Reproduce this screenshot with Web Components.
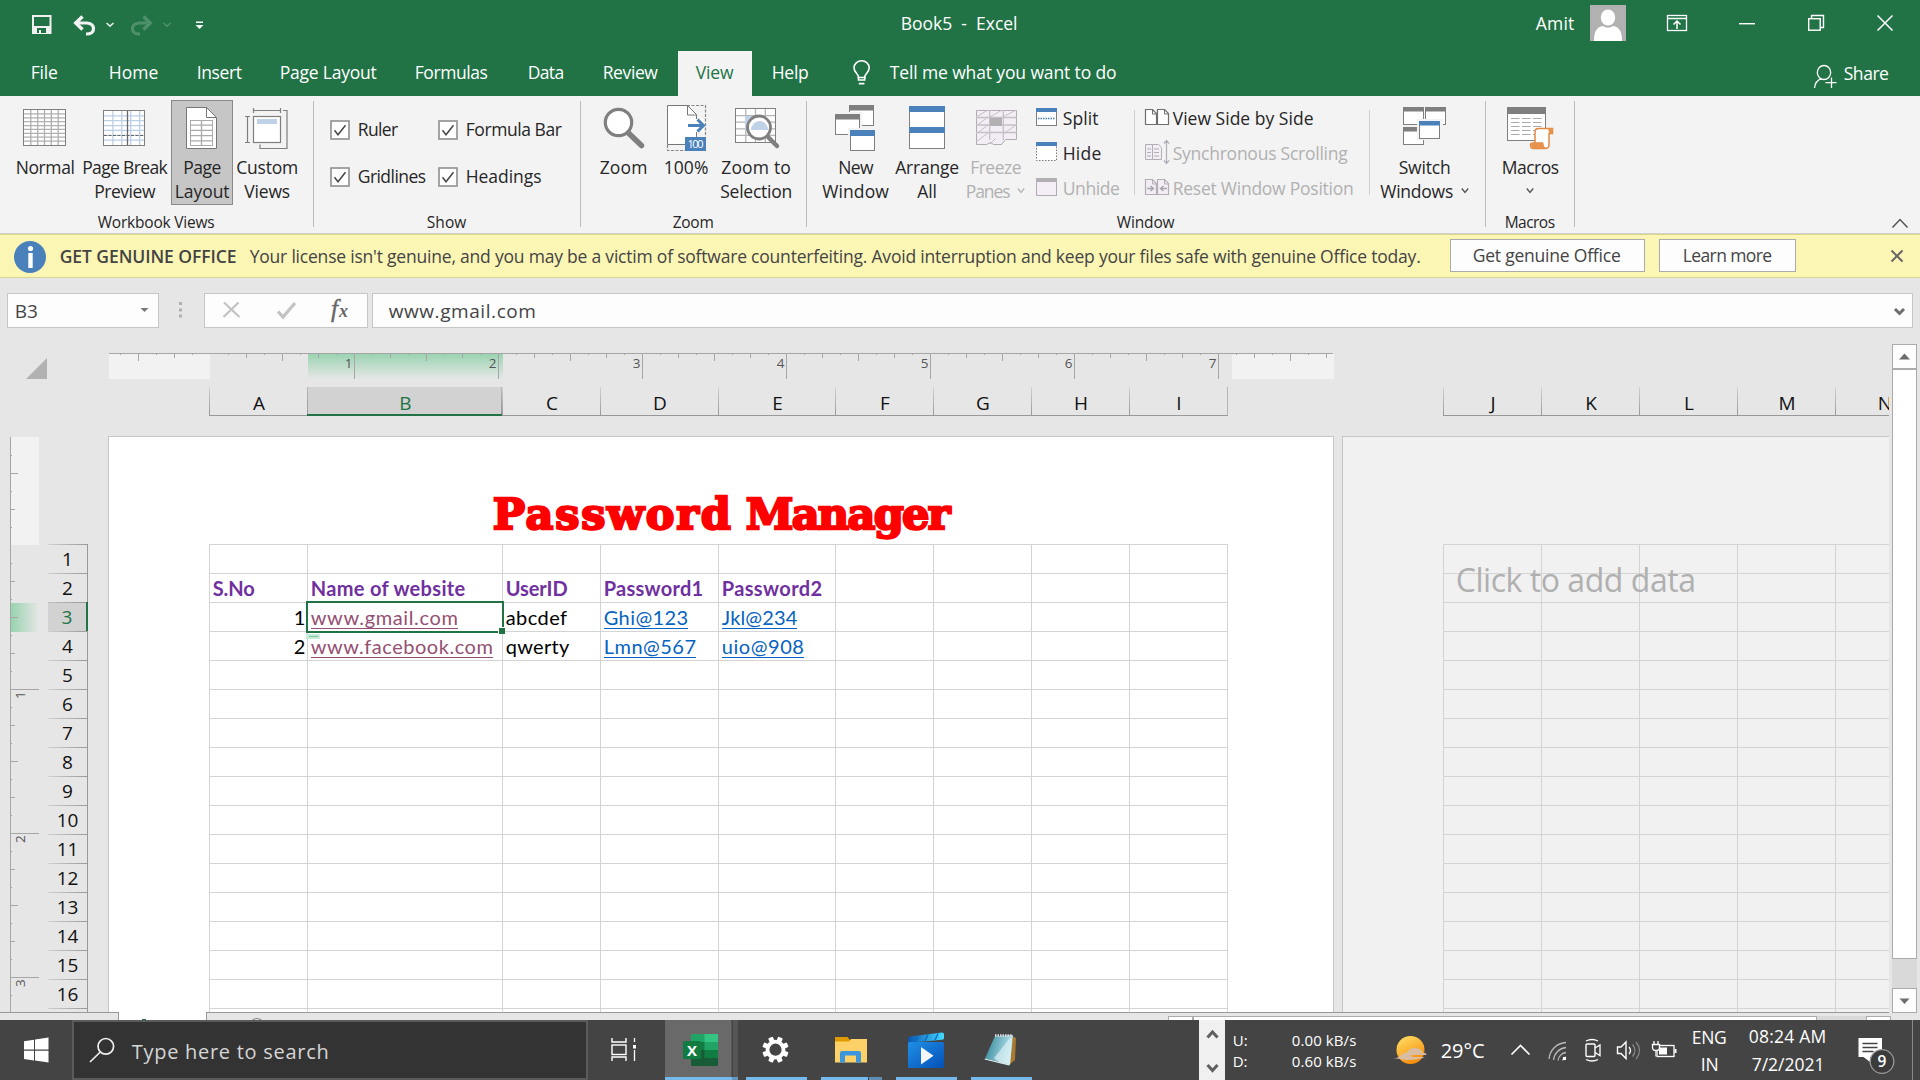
<!DOCTYPE html>
<html lang="en">
<head>
<meta charset="utf-8">
<title>Book5 - Excel</title>
<style>
html,body{margin:0;padding:0}
body{width:1920px;height:1080px;overflow:hidden;display:flex;flex-direction:column;background:#e6e6e6;font-family:"Open Sans","Noto Sans",sans-serif;font-size:17.5px;color:#262626}
</style>
</head>
<body>
<xl-titlebar></xl-titlebar>
<xl-tabs></xl-tabs>
<xl-ribbon></xl-ribbon>
<xl-message></xl-message>
<xl-formulabar></xl-formulabar>
<xl-workspace></xl-workspace>
<xl-bottomstrip></xl-bottomstrip>
<win-taskbar></win-taskbar>
<script>
/* ---------- helpers ---------- */
const svg = (x, y, w, h, body) => `<svg width="${w}" height="${h}" viewBox="${x} ${y} ${w} ${h}" fill="none">${body}</svg>`;
const T = (w, text, css = '') => `<fit-text w="${w}" style="${css}">${text}</fit-text>`;
/* lays out [x, width, html] entries one after another in a flex row, with the gaps as margins */
const row = (start, items) => {
  let at = start;
  return items.map(([x, w, html, css = '']) => {
    const m = x - at; at = x + w;
    return `<div style="flex:none;margin-left:${m}px;width:${w}px;${css}">${html}</div>`;
  }).join('');
};
const R = (x, y, w, h, fill, stroke, extra = '') => `<rect x="${x}" y="${y}" width="${w}" height="${h}" fill="${fill}" ${stroke ? `stroke="${stroke}"` : ''} ${extra}/>`;
const P = (d, stroke, sw = 1, extra = '') => `<path d="${d}" stroke="${stroke}" stroke-width="${sw}" ${extra}/>`;
const F = (d, fill) => `<path d="${d}" fill="${fill}"/>`;

class Base extends HTMLElement {
  connectedCallback() {
    if (this.shadowRoot) return;
    this.attachShadow({ mode: 'open' });
    this.shadowRoot.innerHTML = `<style>:host,*{box-sizing:border-box}svg{display:block;flex:none}${this.css()}</style>${this.html()}`;
  }
  css() { return ''; }
  html() { return '<slot></slot>'; }
}

/* ---------- title bar ---------- */
class TitleBar extends Base {
  css() { return `:host{display:flex;flex:none;height:51px;background:#217346;color:#fff;line-height:46px;align-items:flex-start}`; }
  html() {
    const chev = (x, c) => P(`M${x} 23l3.5 3.2l3.5-3.2`, c, 1.6);
    const qat = svg(30, 0, 180, 51,
      `<path d="M32 15h19.5v19H32z" fill="#f0f0f0"/><path d="M34 17h15.5v9H34zM37 28h9v5h-9z" fill="#217346"/>` + R(39, 30, 2, 3, '#f0f0f0')
      + P('M77 23H87q6.500 .5 6.500 5.800T86 34', '#f2f2f2', 3.200) + P('M82.500 16.500L75.800 23L82.500 29.500', '#f2f2f2', 3.500)
      + chev(106.5, '#dfeae3')
      + P('M149 23H139q-6.500 .5-6.500 5.800T140 34', '#4d9069', 3.200) + P('M143.500 16.500L150.200 23L143.500 29.500', '#4d9069', 3.500)
      + chev(163.5, '#4d9069')
      + R(196, 21.5, 7, 1.5, '#fff') + F('M195.500 25h8l-4 4z', '#fff'));
    const avatar = svg(1590, 5, 36, 36, R(1590, 5, 36, 36, '#b1b1b1')
      + `<ellipse cx="1608" cy="17.500" rx="7.2" ry="8" fill="#fff"/>` + F('M1594 41c0-10 3-14 9-15q5 3.500 10 0c6 1 9 5 9 15z', '#fff'));
    const ctl = svg(1660, 0, 240, 46,
      R(1667.5, 15.5, 19, 15, 'none', '#fff', 'stroke-width="1.300"') + P('M1667 18.500H1687M1677 29v-8M1673.500 24.500l3.500-3.500l3.500 3.500', '#fff', 1.5)
      + R(1739, 23, 16, 1.4, '#fff')
      + R(1808.7, 18.7, 11.500, 11.500, 'none', '#fff', 'stroke-width="1.4"') + P('M1811.500 18.500v-3H1823.500v12H1820.500', '#fff', 1.4)
      + P('M1877.500 15.500l15 15M1892.500 15.500l-15 15', '#fff', 1.5));
    return row(0, [[30, 180, qat], [901, 116, T(116, 'Book5  -  Excel')], [1536, 38, T(38, 'Amit')], [1590, 36, avatar, 'padding-top:5px'], [1660, 240, ctl]]);
  }
}

/* ---------- ribbon tabs ---------- */
class Tab extends Base {
  css() { return `:host{display:block;flex:none;height:45px;line-height:43px;text-align:center}
    :host([active]){background:#f3f3f3;color:#217346}`; }
  html() { return `<slot></slot>`; }
}
class Tabs extends Base {
  css() { return `:host{display:flex;flex:none;height:45px;background:#217346;color:#fff;line-height:43px}`; }
  html() {
    const t = (x, w, s) => [x, w, `<xl-tab>${T(w, s)}</xl-tab>`];
    const bulb = svg(850, 56, 24, 34, P('M858.500 80v-3.200c0-2.600-4.500-4-4.500-9a7.600 7 0 0 1 15.200 0c0 5-4.500 6.400-4.500 9v3.200z', '#fff', 1.6) + P('M857.500 77.500h8.200M858.800 83.700h5.600', '#fff', 1.7));
    const person = svg(1812, 60, 28, 32, `<ellipse cx="1824" cy="72.500" rx="6.700" ry="7" stroke="#fff" stroke-width="1.300"/>` + P('M1814.500 88c.5-5 3-8.200 7-9.200', '#fff', 1.3) + P('M1831.500 77.500v10.500M1825.500 82.700h11', '#fff', 1.300));
    return row(0, [t(31, 26, 'File'), t(109, 49, 'Home'), t(197, 44, 'Insert'), t(280, 96, 'Page Layout'), t(415, 72, 'Formulas'), t(528, 35, 'Data'), t(603, 54, 'Review'),
      [678, 74, `<xl-tab active><div style="padding-left:18px">${T(37, 'View')}</div></xl-tab>`], t(772, 36, 'Help'),
      [850, 24, bulb, 'padding-top:5px'], [890, 226, T(226, 'Tell me what you want to do')],
      [1812, 28, person, 'padding-top:9px'], [1844, 44, T(44, 'Share'), 'padding-top:1px']]);
  }
}

/* ---------- ribbon ---------- */
const gridLines = (x, y, w, h, nx, ny, c) => {
  let d = '';
  for (let i = 1; i < nx; i++) d += `M${(x + w * i / nx).toFixed(1)} ${y}v${h}`;
  for (let i = 1; i < ny; i++) d += `M${x} ${(y + h * i / ny).toFixed(1)}h${w}`;
  return P(d, c, 1.3);
};
const G = '#7f7f7f', B = '#4a81ba';
const ICONS = {
  normal: R(23.500, 109.500, 42, 36, '#fff', G) + gridLines(24, 110, 41, 35, 6, 9, '#b0b0b0'),
  pbreak: R(103.500, 110.500, 41, 35, '#fff', G) + gridLines(104, 111, 40, 34, 4.500, 7, '#bccfe5') + P('M127.500 111v34', '#666', 1.3) + P('M104 135.500h40', '#666', 1.2, 'stroke-dasharray="3 1.500"'),
  playout: `<path d="M186.500 107.500h20l10 10v31h-30z" fill="#fff" stroke="#777"/>` + P('M206.500 107.500v10h10', '#777') + R(190.500, 120.500, 22, 25, '#fff', '#aaa') + gridLines(190, 120, 23, 26, 2, 5, '#aaa'),
  custom: R(253.500, 116.500, 27, 26, '#fff', G, 'stroke-width="1.200"') + R(257, 119, 20, 5, '#bfd2e8') + P('M253.500 108v5M253.500 110.500h27M280.500 108v5M245 116.500h5M247.500 116.500v26M245 142.500h5M283 110.500h4v38h-27v-4', G, 1.2),
  zoom: `<circle cx="618.500" cy="122.500" r="13.200" fill="#fff" stroke="#7f7f7f" stroke-width="3.200"/>` + P('M628.500 133L641.500 145.500', G, 5.500, 'stroke-linecap="round"'),
  hundred: P('M687 105.500h18.500v31M667.500 145v5.500h18', '#888', 1.200, 'stroke-dasharray="3 1.500"') + `<path d="M667.500 105.500h20l9 9v30h-29z" fill="#fff" stroke="#777"/>` + P('M687.500 105.500v9.500h9', '#777')
    + R(684, 119, 20, 13, '#fff') + P('M688 125.500h15M697.500 119.500l6 6l-6 6', B, 3) + R(685, 137, 21, 14, B) + `<text x="695.500" y="148.300" font-size="11" fill="#fff" text-anchor="middle" textLength="16">100</text>`,
  zoomsel: R(735.500, 108.500, 40, 34, '#fff', G) + gridLines(736, 109, 39, 33, 4, 5, '#b5b5b5') + R(745, 116, 15, 14, '#bfd2e8') + `<circle cx="759" cy="127.500" r="11.500" fill="#fff" stroke="#7f7f7f" stroke-width="2.800"/><path d="M751 130a8.500 9 0 0 1 17 0z" fill="#bfd2e8"/>` + P('M768 137l9 9', G, 4.500, 'stroke-linecap="round"'),
  neww: R(849.500, 105.500, 24, 20, '#fff', G) + R(849, 105, 25, 5.500, G) + R(833, 112, 29, 24, '#f3f3f3') + R(835.500, 114.500, 24, 20, '#fff', G) + R(835, 114, 25, 5.500, G) + R(848, 128, 29, 24, '#f3f3f3') + R(850.500, 130.500, 24, 20, '#fff', G) + R(850, 130, 25, 6, B),
  arrange: R(909.500, 106.500, 35, 42, '#fff', G) + R(909, 106, 36, 6, B) + R(909, 127, 36, 6, B),
  freeze: `<path d="M976.500 110.500h40v29h-11l-4 5h-8l-3 -2l-4 2h-10z" fill="#f3eef5" stroke="#b0acb2"/>` + gridLines(976, 110, 41, 30, 3, 4, '#c4c0c6') + P('M976 117l12-7M990 117l12-7M1003 117l13-7M976 126l12-9M976 134l12-9M976 142l12-9M990 144l6-6M1003 134l13-9', '#c4c0c6') + R(990, 118, 12, 8, '#b3b0b4'),
  switchw: R(1403.500, 107.500, 20, 17, '#fff', G) + R(1403, 107, 21, 4.500, G) + R(1425.500, 107.500, 20, 17, '#fff', G) + R(1425, 107, 21, 4.500, G) + R(1403.500, 127.500, 20, 17, '#fff', G) + R(1403, 127, 21, 4.500, G) + R(1417, 119, 26, 21, '#f3f3f3') + R(1419.500, 121.500, 20, 17, '#fff', G) + R(1419, 121, 21, 4.500, B),
  macros: R(1507.500, 107.500, 38, 33, '#fff', G) + R(1507, 107, 39, 7, G) + P('M1511 118.500h31M1511 122.500h31M1511 126.500h31M1511 130.500h25M1511 134.500h25', '#aaa', 1.2, 'stroke-dasharray="8.500 2.500"')
    + `<path d="M1535 144v-12q0-3.500 3.500-3.500h14v5h-3.500v11q0 4-4 4h-11q-3.500 0-3.500-3.500q0-2 3-2h9.500" fill="#fff" stroke="#e08b45" stroke-width="1.500"/>` + F('M1531 143h12.500q0 4 3 5.500h-12q-4 0-3.500-5.500zM1548 128.300h4q2 2 0 5.200h-2.800z', '#e8924b'),
};
const chevAt = (c = '#555') => svg(0, 0, 8, 24, P('M.8 9.500l3.200 4l3.200-4', c, 1.4));

class BigButton extends Base {
  css() { return `:host{display:flex;flex-direction:column;align-items:center;flex:none;height:105px;border:1px solid transparent;line-height:24px}
    :host([on]){background:#c6c6c6;border-color:#8a8a8a}:host([off]){color:#b1b1b1}
    .l{display:flex;height:24px;gap:8px;justify-content:center}`; }
  html() {
    const x = +this.getAttribute('x'), w = +this.getAttribute('w');
    this.style.width = w + 'px';
    const lines = JSON.parse(this.getAttribute('lines'));
    const off = this.hasAttribute('off');
    return svg(x, 101, w, 54, ICONS[this.getAttribute('icon')]) + lines.map(([wd, s, ch]) =>
      `<div class="l">${wd ? T(wd, s) : ''}${ch ? chevAt(off ? '#b5b5b5' : '#555') : ''}</div>`).join('');
  }
}
const big = (x, w, icon, lines, flag = '') => [x, w, `<xl-bigbutton x="${x}" w="${w}" icon="${icon}" lines='${JSON.stringify(lines)}' ${flag}></xl-bigbutton>`];

class SmallButton extends Base {
  css() { return `:host{display:flex;height:35px;line-height:35px;align-items:flex-start}:host([off]){color:#b1b1b1}`; }
}
class Check extends Base {
  css() { return `:host{display:flex;height:47px;line-height:47px;align-items:center;gap:8px}`; }
  html() { return svg(0, 0, 20, 20, R(1, 1, 18, 18, '#fff', '#8f8f8f', 'stroke-width="1.600"') + P('M4.500 10.200l3.500 4.500l7.500-9.500', '#444', 1.500)) + '<slot></slot>'; }
}
class Group extends Base {
  css() { return `:host{display:flex;flex-direction:column;flex:none;height:137px;padding-top:4px;position:relative}
    .b{display:flex;height:107px}.t{height:22px;line-height:22px;font-size:15.500px;display:flex;justify-content:center;margin-top:4px}
    :host::after{content:"";width:1px;height:126px;background:#bdbdbd;position:absolute;right:0;top:5px}`; }
  html() { return `<div class="b"><slot></slot></div><div class="t" style="padding-right:2px">${T(this.getAttribute('tw'), this.getAttribute('label'))}</div>`; }
}
class Ribbon extends Base {
  css() { return `:host{display:flex;flex:none;height:138px;background:#f3f3f3;border-bottom:1px solid #cfcfcf}.s{width:1px;height:85px;background:#d0d0d0;margin-top:10px}`; }
  html() {
    const group = (x0, x1, label, tw, items) => `<xl-group label="${label}" tw="${tw}" style="width:${x1 - x0}px">${row(x0, items)}</xl-group>`;
    const small = (y, w, text, body, iconX, off, gap) => `<xl-smallbutton ${off ? 'off' : ''}>${svg(iconX, y, gap, 35, body)}${T(w, text)}</xl-smallbutton>`;
    const win = (y, c, kind) => kind === 'hide'
      ? R(1036.500, y + .5, 20, 18, '#fff', '#777', 'stroke-dasharray="1.500 1.500"') + R(1036, y, 21, 4, c)
      : R(1036.500, y + .5, 20, 17, kind === 'un' ? '#f3eef5' : '#fff', kind === 'un' ? '#b0acb2' : G) + R(1036, y, 21, 4, c) + (kind === 'split' ? P(`M1038 ${y + 10.500}h17`, B, 1.3, 'stroke-dasharray="1.500 1"') : '');
    const pages = (y, c, f) => `<path d="M1145.500 ${y + .5}h7l4 4v11h-11zM1157.500 ${y + .5}h7l4 4v11h-11z" fill="${f}" stroke="${c}" stroke-width="1.200"/>` + P(`M1152.500 ${y}v5h4M1164.500 ${y}v5h4`, c);
    const L = '#b3aeb6', V = '#f3eef5';
    const sync = `<path d="M1145.500 144.500h7v15h-7zM1152.500 144.500h6l3 3v12h-9z" fill="${V}" stroke="${L}"/>` + P('M1147 149h4M1147 152.500h4M1147 156h4M1154 149h5M1154 152.500h5M1154 156h5M1166.500 141v22M1164 143.500l2.500-3l2.500 3M1164 160.500l2.500 3l2.500-3', L, 1.2);
    const reset = pages(179, L, V) + P('M1147 188.500h6M1150.500 186l3 2.500l-3 2.500M1167 188.500h-6M1163.500 186l-3 2.500l3 2.500', '#a9a5ab', 1.5);
    const col1 = small(101, 35, 'Split', win(108, B, 'split'), 1036, 0, 27) + small(136, 38, 'Hide', win(142, B, 'hide'), 1036, 0, 27) + small(171, 56, 'Unhide', win(178, '#b3b0b4', 'un'), 1036, 1, 27);
    const col2 = small(101, 140, 'View Side by Side', pages(109, '#6e6e6e', '#fff'), 1144, 0, 29) + small(136, 174, 'Synchronous Scrolling', sync, 1144, 1, 29) + small(171, 180, 'Reset Window Position', reset, 1144, 1, 29);
    const ck = (w, s) => `<xl-check>${T(w, s)}</xl-check>`;
    return group(0, 314, 'Workbook Views', 116, [
        big(8, 74, 'normal', [[58, 'Normal']]), big(82, 85, 'pbreak', [[84, 'Page Break'], [60, 'Preview']]),
        big(171, 62, 'playout', [[37, 'Page'], [54, 'Layout']], 'on'), big(234, 66, 'custom', [[61, 'Custom'], [45, 'Views']])])
      + group(314, 581, 'Show', 39, [
        [330, 100, ck(39, 'Ruler') + ck(67, 'Gridlines'), 'padding-top:6px'], [438, 130, ck(95, 'Formula Bar') + ck(75, 'Headings'), 'padding-top:6px']])
      + group(581, 807, 'Zoom', 40, [
        big(595, 57, 'zoom', [[47, 'Zoom']]), big(660, 52, 'hundred', [[44, '100%']]), big(716, 80, 'zoomsel', [[69, 'Zoom to'], [71, 'Selection']])])
      + group(807, 1486, 'Window', 57, [
        big(818, 75, 'neww', [[34, 'New'], [66, 'Window']]), big(893, 68, 'arrange', [[63, 'Arrange'], [19, 'All']]), big(961, 69, 'freeze', [[50, 'Freeze'], [43, 'Panes', 1]], 'off'),
        [1036, 90, col1, 'padding-top:1px'], [1134, 1, '<div class="s"></div>'], [1144, 215, col2, 'padding-top:1px'], [1369, 1, '<div class="s"></div>'],
        big(1376, 97, 'switchw', [[51, 'Switch'], [72, 'Windows', 1]])])
      + group(1486, 1575, 'Macros', 49, [big(1495, 70, 'macros', [[56, 'Macros'], [0, '', 1]])])
      + `<div style="margin:118px 0 0 314px">${svg(1889, 214, 22, 18, P('M1892.500 227.500l7.500-8l7.500 8', '#555', 1.5))}</div>`;
  }
}

/* ---------- message bar ---------- */
class Message extends Base {
  css() { return `:host{display:flex;flex:none;height:44px;background:#fcf6b5;border-top:1px solid #dbd689;border-bottom:1px solid #d8d592;color:#444;line-height:42px}
    .b{height:33px;line-height:31px;background:#fdfdfd;border:1px solid #ababab;padding-left:22px;margin-top:4px}`; }
  html() {
    const info = svg(14, 235, 32, 42, `<circle cx="30" cy="257" r="16" fill="#4a81ba"/><circle cx="30.500" cy="248.500" r="2.600" fill="#fff"/>` + R(28.300, 253, 4.400, 15, '#fff'));
    return row(0, [[14, 32, info], [60, 176, T(176, 'GET GENUINE OFFICE', 'font-weight:600')],
      [250, 1170, T(1170, "Your license isn't genuine, and you may be a victim of software counterfeiting. Avoid interruption and keep your files safe with genuine Office today.")],
      [1450, 195, `<div class="b">${T(147, 'Get genuine Office')}</div>`], [1659, 137, `<div class="b">${T(88, 'Learn more', 'margin-left:1px')}</div>`],
      [1889, 16, svg(1889, 235, 16, 42, P('M1891.500 250.500l11 11M1902.500 250.500l-11 11', '#666', 2))]]);
  }
}

/* ---------- formula bar ---------- */
class FormulaBar extends Base {
  css() { return `:host{display:flex;flex:none;height:50px;padding-top:15px;color:#444;line-height:35px}
    .x{height:35px;border:1px solid #c6c6c6;background:#fdfdfd;display:flex;font-size:19px}`; }
  html() {
    return row(0, [
      [7, 152, `<div class="x">${row(8, [[15, 22, T(22, 'B3')], [138, 14, svg(138, 294, 14, 33, F('M140.500 308h8l-4 4z', '#777'))]])}</div>`],
      [176, 8, svg(176, 293, 8, 35, R(179, 302, 3, 3, '#b0b0b0') + R(179, 308.500, 3, 3, '#b0b0b0') + R(179, 314.500, 3, 3, '#b0b0b0'))],
      [204, 164, `<div class="x">${svg(205, 294, 160, 33, P('M224 302.500l15.500 14.500M238.500 302.500l-15 14.500', '#c3c3c3', 2.300) + P('M278 311.500l5 5.500L295 303', '#c3c3c3', 3.200)
        + '<text x="331" y="316.500" font-family="Liberation Serif" font-style="italic" font-size="25" fill="#666" stroke="#666" stroke-width=".4">f</text><text x="339" y="316.500" font-family="Liberation Serif" font-style="italic" font-weight="bold" font-size="18" fill="#666">x</text>')}</div>`],
      [372, 1541, `<div class="x">${row(373, [[389, 147, T(147, 'www.gmail.com')], [1890, 20, svg(1890, 294, 20, 33, P('M1895 309l4.500 4.500L1904 309', '#6d6d6d', 3))]])}</div>`]]);
  }
}

/* ---------- rulers ---------- */
class HRuler extends Base {
  css() { return `:host{display:block;flex:none;width:1225px;height:26px}`; }
  html() {
    let d = '', n = '';
    for (let k = -5; k <= 62; k++) {
      const x = 210.500 + 18 * k; if (x > 1333) break;
      const inch = k % 8 === 0 && k > 0;
      if (k === 0) continue;
      const len = inch ? 26 : k % 4 === 0 ? 8 : k % 2 === 0 ? 5 : 2;
      d += `M${x} 353v${len}`;
      if (inch) n += `<text x="${x - 2}" y="368" text-anchor="end" font-size="13.500" fill="#555">${k / 8}</text>`;
    }
    return svg(109, 353, 1225, 26, `<defs><linearGradient id="g" x2="0" y2="1"><stop stop-color="#98d3af"/><stop offset="1" stop-color="#e6e6e6"/></linearGradient></defs>`
      + R(109, 353, 101, 26, '#f2f2f2') + R(1232, 353, 102, 26, '#f2f2f2') + R(308, 353, 195, 26, 'url(#g)') + P('M109 353.500H1333', '#a6a6a6') + P(d, '#a6a6a6') + n);
  }
}
class VRuler extends Base {
  css() { return `:host{display:block;flex:none;width:29px;height:576px}`; }
  html() {
    let d = '', n = '';
    for (let k = -5; k <= 25; k++) {
      if (!k) continue;
      const y = 545.500 + 18 * k, inch = k % 8 === 0;
      d += `M10 ${y}h${inch ? 29 : k % 4 === 0 ? 8 : k % 2 === 0 ? 5 : 2}`;
      if (inch) n += `<text transform="translate(25 ${y + 9.500}) rotate(-90)" font-size="13.500" fill="#555">${k / 8}</text>`;
    }
    return svg(10, 436, 29, 576, `<defs><linearGradient id="g"><stop stop-color="#98d3af"/><stop offset="1" stop-color="#e6e6e6"/></linearGradient></defs>`
      + R(11, 437, 28, 108, '#f2f2f2') + R(11, 603, 28, 29, 'url(#g)') + P('M10.500 437V1012', '#a6a6a6') + P(d, '#a6a6a6') + n);
  }
}

/* ---------- worksheet ---------- */
const COLS = [['A', 98], ['B', 195], ['C', 98], ['D', 118], ['E', 117], ['F', 98], ['G', 98], ['H', 98], ['I', 98]];
const COLS2 = [['J', 98], ['K', 98], ['L', 98], ['M', 98], ['N', 98]];
class ColHeads extends Base {
  css() { return `:host{display:flex;flex:none;height:29px;font-size:19px;color:#111;line-height:32px}
    div{flex:none;text-align:center;padding-left:2px;height:29px;border-bottom:1px solid #999;background:linear-gradient(#d2d2d2,#999) left/1px 100% no-repeat}
    .on{background:linear-gradient(#b8b8b8,#999) left/1px 100% no-repeat,linear-gradient(#b8b8b8,#999) right/1px 100% no-repeat,#d2d2d2;border-bottom:2px solid #217346;color:#217346}
    .end{width:1px;padding:0;background:#b5b5b5}`; }
  html() {
    const two = this.hasAttribute('second');
    return (two ? COLS2 : COLS).map(([n, w]) => `<div class="${n === 'B' ? 'on' : ''}" style="width:${w}px">${n}</div>`).join('') + (two ? '' : '<div class="end"></div>');
  }
}
class RowHeads extends Base {
  css() { return `:host{display:flex;flex:none;flex-direction:column;width:40px;padding-top:108px;height:576px;overflow:hidden;font-size:19px;line-height:31px;color:#111}
    div{flex:none;height:29px;text-align:center;border-right:1px solid #999;background:linear-gradient(90deg,#d0d0d0,#999) top/100% 1px no-repeat}
    .on{background:linear-gradient(90deg,#c0c0c0,#999) top/100% 1px no-repeat,#d2d2d2;border-right:2px solid #217346;color:#217346}`; }
  html() { return Array.from({ length: 17 }, (_, i) => `<div class="${i === 2 ? 'on' : ''}">${i < 16 ? i + 1 : ''}</div>`).join(''); }
}
const DATA = {
  '2A': ['h', 41, 'S.No'], '2B': ['h', 154, 'Name of website'], '2C': ['h', 61, 'UserID'], '2D': ['h', 99, 'Password1'], '2E': ['h', 100, 'Password2'],
  '3A': ['r', 11, '1'], '3B': ['v', 147, 'www.gmail.com'], '3C': ['', 61, 'abcdef'], '3D': ['l', 84, 'Ghi@123'], '3E': ['l', 75, 'Jkl@234'],
  '4A': ['r', 11, '2'], '4B': ['v', 182, 'www.facebook.com'], '4C': ['', 63, 'qwerty'], '4D': ['l', 92, 'Lmn@567'], '4E': ['l', 82, 'uio@908'],
};
class Page extends Base {
  css() { return `:host{display:flex;flex-direction:column;flex:none;height:576px;border:1px solid #c6c6c6;border-bottom:0;background:#fff;padding-left:100px;overflow:hidden}
    :host([blank]){background:#f1f1f1;border-right:0}
    .top{height:107px;flex:none;color:#f00;font:900 43px "DejaVu Serif",serif;-webkit-text-stroke:2.400px #f00}
    .g{display:grid;grid-auto-rows:29px;flex:none;font-family:Lato,sans-serif;font-size:20px;line-height:28px;color:#000}
    .c{border-top:1px solid #d4d4d4;border-left:1px solid #d4d4d4;padding-left:3px;position:relative;display:flex}
    .e{border-right:1px solid #d4d4d4}
    .h{font-weight:700;color:#7030a0}.r{justify-content:flex-end;padding-right:2px}
    .v{color:#954f72}.l{color:#0563c1}
    .u{height:26px;border-bottom:1px solid currentColor}
    .sel{position:absolute;left:-2px;top:-2px;width:198px;height:32px;border:2px solid #217346;z-index:1}
    .sel::after{content:"";position:absolute;right:-3px;bottom:-3px;width:6px;height:6px;background:#217346;border:1px solid #fff;border-width:1px 0 0 1px;box-sizing:content-box}
    .chip{position:absolute;left:-2px;top:31px;width:14px;height:5px;background:linear-gradient(#7cc49b,#7cc49b) 3px 2px/9px 1px no-repeat #c9ecd8;z-index:1}
    .hint{position:absolute;left:12px;top:3px;color:#b0b0b0;font:32px "Open Sans";line-height:64px;z-index:1}`; }
  html() {
    const blank = this.hasAttribute('blank'), cols = blank ? COLS2 : COLS;
    let cells = '';
    for (let r = 1; r <= 17; r++) cols.forEach(([n], i) => {
      const d = DATA[r + n], link = d && (d[0] === 'v' || d[0] === 'l');
      const body = d ? `<div class="${link ? 'u' : ''}">${T(d[1], d[2])}</div>` : '';
      const over = r === 3 && n === 'B' ? '<div class="sel"></div><div class="chip"></div>' : blank && r === 1 && n === 'J' ? `<div class="hint">${T(239, 'Click to add data')}</div>` : '';
      cells += `<div class="c ${d ? d[0] : ''} ${!blank && i === 8 ? 'e' : ''}">${body}${over}</div>`;
    });
    const tpl = cols.map(([n, w], i) => (!blank && i === 8 ? w + 1 : w) + 'px').join(' ');
    return `<div class="top">${blank ? '' : `<div style="padding:45px 0 0 284px;line-height:64px">${T(456, '<span style="letter-spacing:1.700px">Password</span><span style="letter-spacing:-1.700px"> Manager</span>', 'transform-origin:0 50%').replace('<fit-text', '<fit-text stretch')}</div>`}</div><div class="g" style="grid-template-columns:${tpl}">${cells}</div>`;
  }
}
class VScroll extends Base {
  css() { return `:host{display:flex;flex:none;flex-direction:column;width:25px;height:669px;margin-top:16px;background:#d9d9d9}
    .b{height:25px;background:#fdfdfd;border:1px solid #ababab;flex:none}.t{height:590px;flex:none;background:#fff;border:1px solid #ababab}.k{flex:1}`; }
  html() {
    return `<div class="b">${svg(0, 0, 23, 23, F('M6 14.500l5.500-6l5.500 6z', '#6d6d6d'))}</div><div class="t"></div><div class="k"></div><div class="b">${svg(0, 0, 23, 23, F('M6.500 9.500l5 5.500l5-5.500z', '#6d6d6d'))}</div>`;
  }
}
class Workspace extends Base {
  css() { return `:host{display:flex;flex:none;height:684px;width:1920px}
    .m{width:1889px;height:684px;overflow:hidden;display:flex;flex-direction:column;flex:none;margin-right:3px}
    .r{display:flex;flex:none}`; }
  html() {
    return `<div class="m">
      <div class="r" style="padding-top:25px;height:51px"><div style="flex:none;width:109px;padding:5px 0 0 26px">${svg(26, 358, 22, 21, F('M47 358v21H26z', '#b2b2b2'))}</div><xl-hruler></xl-hruler></div>
      <div class="r" style="padding:8px 0 0 209px;height:57px"><xl-colheads></xl-colheads><xl-colheads second style="margin-left:215px"></xl-colheads></div>
      <div class="r" style="padding-left:10px"><xl-vruler></xl-vruler><xl-rowheads style="margin-left:9px"></xl-rowheads>
        <xl-page style="margin-left:20px;width:1226px"></xl-page><xl-page blank style="margin-left:8px;width:620px"></xl-page></div>
    </div><xl-vscroll></xl-vscroll>`;
  }
}
class BottomStrip extends Base {
  css() { return `:host{display:block;flex:none;height:8px;overflow:hidden}`; }
  html() {
    return svg(0, 1012, 1920, 8, R(0, 1012, 1920, 8, '#e6e6e6') + P('M0 1012.500H119M206 1012.500H1889', '#999') + R(119, 1012, 87, 8, '#fff') + P('M118.500 1012v8M206.500 1012v8', '#999') + R(142, 1019, 4, 1, '#217346')
      + `<circle cx="257" cy="1025" r="6.500" stroke="#888" stroke-width="1.200"/>`
      + R(1168.500, 1016.500, 24, 10, '#fff', '#ababab') + R(1193.500, 1016.500, 623, 10, '#fff', '#ababab') + R(1817, 1016, 49, 5, '#d9d9d9') + R(1866.500, 1016.500, 24, 10, '#fff', '#ababab') + R(1892, 1012, 25, 1, '#ababab'));
  }
}

/* ---------- taskbar ---------- */
class TaskApp extends Base {
  css() { return `:host{display:block;height:60px}`; }
}
class Taskbar extends Base {
  css() { return `:host{display:flex;flex:none;height:60px;background:#444;color:#fff;align-items:flex-start;overflow:hidden}
    .search{height:60px;border:2px solid #5b5b5b;background:#333;color:#d6d6d6;font-size:20px;line-height:60px;display:flex}
    .two{display:flex;flex-direction:column}`; }
  html() {
    const U = '#76b9ed', W = '#fff';
    const start = svg(24, 1020, 25, 60, F('M24 1041.300l10-1.500v9.700H24zM35 1039.600l13.500-2v11.900H35zM24 1050.700h10v9.700l-10-1.400zM35 1050.700h13.500v11.800L35 1060.500z', W));
    const glass = svg(88, 1022, 30, 56, `<circle cx="105.800" cy="1046.300" r="7.800" stroke="#eee" stroke-width="1.700"/>` + P('M100.300 1052L90 1062', '#eee', 1.7));
    const view = svg(610, 1020, 28, 60, P('M612 1038v4h14v-4M612 1061v-4h14v4', W, 1.400) + R(612, 1045, 14, 9.500, 'none', W, 'stroke-width="1.400"') + P('M634.500 1038v4M634.500 1050v11', W, 1.300) + R(633, 1045, 3, 3.500, W));
    const excel = svg(665, 1020, 73, 60, R(665, 1020, 67, 60, '#696969') + R(732, 1020, 6, 60, '#555') + R(731.500, 1020, 1.500, 60, '#444') + R(665, 1077, 67, 3, U) + R(732, 1077, 6, 3, '#6596bd')
      + R(691, 1034, 27, 32, '#185c37', 0, 'rx="1.500"') + R(691, 1034, 14, 8, '#21a366') + R(704.500, 1034, 13.500, 8, '#33c481') + R(691, 1042, 14, 8, '#107c41') + R(704.500, 1042, 13.500, 8, '#21a366') + R(704.500, 1050, 13.500, 8, '#107c41')
      + R(683, 1041, 18, 18, '#107c41', 0, 'rx="1.500"') + `<text x="692" y="1055.500" font-size="15" font-weight="700" fill="#fff" text-anchor="middle">X</text>`);
    let teeth = '';
    for (let i = 0; i < 8; i++) teeth += `<rect x="773" y="1036.500" width="5" height="6" rx="1" fill="#fff" transform="rotate(${i * 45 + 22.500} 775.500 1049.700)"/>`;
    const gear = svg(746, 1020, 61, 60, teeth + `<circle cx="775.500" cy="1049.700" r="8" stroke="#fff" stroke-width="3.800"/>` + R(746, 1077, 61, 3, U));
    const folder = svg(821, 1020, 61, 60, F('M835 1037h12.500l2.500 3v6h-15z', '#e09a00') + F('M835 1041.500h14l2-2.500h16v23.500h-32z', '#fdd168') + F('M840 1062.500v-9.500q0-2 2-2h17q2 0 2 2v9.500h-5v-7h-11v7z', '#3b97dd') + R(821, 1077, 47, 3, U) + R(868, 1077, 1, 3, '#444') + R(869, 1077, 13, 3, '#5f8db3'));
    const movie = svg(896, 1020, 61, 60, `<defs><linearGradient id="m" x2="1" y2="1"><stop stop-color="#1f8fe6"/><stop offset="1" stop-color="#0550b8"/></linearGradient><linearGradient id="n"><stop stop-color="#0a55b0"/><stop offset="1" stop-color="#45dcff"/></linearGradient></defs>`
      + F('M908 1043v-4q0-2 2-2.500l32-4q2 0 2 2v3.500q0 1.500-2 1.800z', 'url(#n)') + R(908, 1042, 36, 26, 'url(#m)', 0, 'rx="1.500"') + P('M915 1042l3-6M925 1041l3-6.500M935 1040l3-6.500', '#0a68c8', 1.300) + F('M921 1047v17.500l12.500-8.700z', '#f4f6fa') + R(896, 1077, 61, 3, U));
    const notes = svg(971, 1020, 61, 60, `<defs><linearGradient id="q" x2="1" y2=".3"><stop stop-color="#287f92"/><stop offset="1" stop-color="#b9e5ee"/></linearGradient></defs>`
      + F('M1012 1036l4 2-1 22-6 5z', '#a8792e') + F('M995 1036l18-1-3 29.500-25-6z', 'url(#q)') + F('M994 1058l16-20 2 0-2 27-10-2z', '#dff3f6aa') + F('M985 1058.500l25 6-1 1-24.500-6z', '#d9eef3') + P('M995 1035.500h17', '#ddd', 2.500, 'stroke-dasharray="1.500 1"') + R(971, 1077, 61, 3, U));
    const spin = svg(1199, 1020, 26, 60, R(1199, 1020, 26, 60, '#f0f0f0') + P('M1207.500 1037.500l5-5.500l5 5.500M1207.500 1065l5 5.500l5-5.500', '#606060', 3));
    const sun = svg(1390, 1020, 42, 60, `<defs><linearGradient id="s" x2=".5" y2="1"><stop stop-color="#ffe36a"/><stop offset="1" stop-color="#f78f0c"/></linearGradient></defs><circle cx="1410.500" cy="1050" r="14" fill="url(#s)"/>`
      + F('M1406 1055q2-7 8-7q7 0 9 5q5 0 3 2zM1393 1058q6 0 7-2q3-4 7-3q4 0 5 4q8 0 13 0q-6 3-18 3z', '#d9bda2'));
    const tray = svg(1508, 1020, 172, 60, P('M1511.500 1054.500l9-9l9 9', W, 1.600)
      + P('M1549 1059a18 18 0 0 1 17-16.500M1553.500 1060a14 14 0 0 1 12.500-12.500M1558 1060.500a9 9 0 0 1 8-8M1562.500 1060.500a5 5 0 0 1 3.500-3.500', '#bbb', 1.300) + R(1563, 1057, 3, 3, W)
      + R(1586, 1044, 9, 12.500, 'none', W, 'rx="1" stroke-width="1.400"') + P('M1595 1048l5-3v10.500l-5-3M1586 1041q6-3 12 0M1586 1059.500q6 3 12 0', W, 1.300)
      + P('M1617.500 1047h3.500l5-5v16.500l-5-5h-3.500z', W, 1.400) + P('M1629 1047q3 3.500 0 7', W, 1.300) + P('M1632.500 1044.500q5 6 0 12M1636 1042q7 8.500 0 17', '#888', 1.300)
      + R(1657, 1045.500, 17, 11, 'none', W, 'stroke-width="1.300"') + R(1659, 1047.500, 8, 7, W) + R(1674.500, 1049, 2, 4, W) + F('M1652 1044.500h8v3q0 3-3.300 3v6h-1.400v-6q-3.300 0-3.300-3z', '#444') + P('M1654 1041v3.500M1658 1041v3.500M1652.500 1044.500h7v3q0 3-3.500 3t-3.500-3zM1656 1050.500v6', W, 1.300));
    const note = svg(1856, 1020, 42, 60, F('M1858.500 1038h23.500v19h-12v5l-6.500-5h-5z', W) + P('M1862.500 1043.500h15M1862.500 1047.500h15M1862.500 1051.500h11', '#444', 1.300) + `<circle cx="1882" cy="1061.500" r="11.800" fill="#3b3b3b" stroke="#999" stroke-width="1.300"/><text x="1882" y="1066.800" font-size="15.500" font-weight="600" fill="#fff" text-anchor="middle">9</text>`);
    const two = (a, b, c, css1 = '', css2 = '') => `<div class="two" style="${c}">${T(a[0], a[1], css1)}${T(b[0], b[1], css2)}</div>`;
    return row(0, [
      [24, 25, start],
      [72, 516, `<div class="search">${row(74, [[88, 30, glass], [132, 197, T(197, 'Type here to search')]])}</div>`],
      [610, 28, view], [665, 73, `<win-app>${excel}</win-app>`], [746, 61, `<win-app>${gear}</win-app>`], [821, 61, `<win-app>${folder}</win-app>`], [896, 61, `<win-app>${movie}</win-app>`], [971, 61, `<win-app>${notes}</win-app>`],
      [1199, 26, spin],
      [1233, 15, two([14, 'U:'], [14, 'D:'], 'font-size:15px;line-height:21px;padding-top:10px')],
      [1292, 64, two([64, '0.00 kB/s'], [64, '0.60 kB/s'], 'font-size:15px;line-height:21px;padding-top:10px')],
      [1390, 42, sun], [1441, 43, T(43, '29°C', 'font-size:20px;line-height:62px')], [1508, 172, tray],
      [1692, 34, two([34, 'ENG'], [17, 'IN'], 'line-height:27px;padding-top:4px', '', 'margin-left:9px')],
      [1749, 77, two([77, '08:24 AM'], [72, '7/2/2021'], 'line-height:27px;padding-top:3px', '', 'margin-left:3px;padding-top:1px')],
      [1856, 42, note], [1912, 1, '<div style="height:60px;background:#8a8a8a"></div>']]);
  }
}

/* spreads its text over the width given in w, by letter spacing or by stretching */
class FitText extends HTMLElement {
  connectedCallback() {
    if (!this.shadowRoot) this.attachShadow({ mode: 'open' }).innerHTML = '<style>:host{display:block;white-space:pre;flex:none;text-align:left;text-indent:-.3px}</style><slot></slot>';
    const w = +this.getAttribute('w'), n = this.textContent.length;
    this.style.width = w + 'px';
    const r = document.createRange(); r.selectNodeContents(this);
    const nat = r.getBoundingClientRect().width;
    if (!nat) return;
    if (this.hasAttribute('stretch')) this.style.transform = `scaleX(${w / nat})`;
    else if (n > 2) this.style.letterSpacing = ((w + .8 - nat) / n).toFixed(3) + 'px';
  }
}
const defs = { 'xl-titlebar': TitleBar, 'xl-tab': Tab, 'xl-tabs': Tabs, 'xl-bigbutton': BigButton, 'xl-smallbutton': SmallButton, 'xl-check': Check, 'xl-group': Group, 'xl-ribbon': Ribbon, 'xl-message': Message, 'xl-formulabar': FormulaBar, 'xl-hruler': HRuler, 'xl-vruler': VRuler, 'xl-colheads': ColHeads, 'xl-rowheads': RowHeads, 'xl-page': Page, 'xl-vscroll': VScroll, 'xl-workspace': Workspace, 'xl-bottomstrip': BottomStrip, 'win-app': TaskApp, 'win-taskbar': Taskbar, 'fit-text': FitText };
for (const k in defs) customElements.define(k, defs[k]);
</script>
</body>
</html>
